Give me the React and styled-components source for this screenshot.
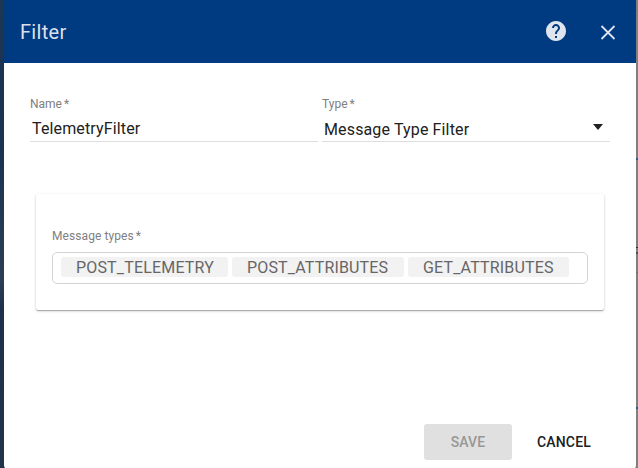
import React from "react";
import styled, { createGlobalStyle } from "styled-components";

const GlobalStyle = createGlobalStyle`
  * { box-sizing: border-box; }
  body { margin: 0; overflow: hidden; font-family: Roboto, "Liberation Sans", sans-serif; }
`;

const Backdrop = styled.div`
  display: grid;
  grid-template-columns: 4px 632px 2px;
  width: 638px;
  height: 468px;
  overflow: hidden;
`;

const NavEdge = styled.div`
  background: linear-gradient(#1d3653 0%, #1b3250 32%, #1e3551 38%, #2b3e56 60%, #1d304c 66%, #22344a 100%);
`;

const PageEdge = styled.div`
  display: flex;
  flex-direction: column;
  background: #7f7f7f;
`;

const EdgeMark = styled.div`
  flex: none;
  height: ${(p) => p.$h}px;
  margin-top: ${(p) => p.$gap}px;
  background: ${(p) => p.$color};
`;

const Dialog = styled.section`
  display: flex;
  flex-direction: column;
  height: 469px;
  background: #fff;
  border-radius: 0 0 4px 4px;
`;

const Under = styled.div`
  background: linear-gradient(90deg, #22344a 50%, #7f7f7f 50%);
`;

const Toolbar = styled.header`
  display: flex;
  align-items: center;
  flex: none;
  height: 63px;
  padding: 0 18px 0 16px;
  background: #003a80;
  color: rgba(255, 255, 255, 0.87);
`;

const Title = styled.h2`
  flex: 1;
  margin: 0;
  font-size: 20px;
  font-weight: 400;
  line-height: 24px;
  letter-spacing: 0.3px;
  padding-top: 1px;
`;

const IconButton = styled.button`
  display: flex;
  padding: 0 0 ${(p) => p.$lift || 0}px;
  margin-left: ${(p) => p.$gap || 0}px;
  border: 0;
  background: none;
  color: inherit;
`;

const Fields = styled.div`
  display: flex;
  gap: 4px;
  padding: 33px 26px 0;
`;

const Field = styled.div`
  width: 288px;
  height: 46px;
  border-bottom: 1px solid #dedede;
`;

const Label = styled.label`
  display: block;
  font-size: 12px;
  line-height: 16px;
  letter-spacing: ${(p) => p.$track || 0}px;
  color: #808080;
`;

const Star = styled.span`
  margin-left: 2px;
`;

const Value = styled.div`
  display: flex;
  justify-content: space-between;
  padding: ${(p) => p.$top}px 7px 0 2px;
  font-size: 16px;
  line-height: 20px;
  letter-spacing: 0.14px;
  color: #212121;
`;

const Caret = styled.span`
  width: 0;
  height: 0;
  margin-top: 4px;
  border: 5.5px solid transparent;
  border-top-width: 6px;
  border-top-color: #212121;
  border-bottom: 0;
`;

const Panel = styled.div`
  width: 568px;
  height: 116px;
  margin: 52px 32px 0;
  padding: 34px 16px 0;
  border-radius: 2px;
  box-shadow: 0 1px 3px rgba(0, 0, 0, 0.2), 0 1px 1px rgba(0, 0, 0, 0.14), 0 2px 1px -1px rgba(0, 0, 0, 0.12);
`;

const ChipList = styled.div`
  display: flex;
  gap: 4px;
  height: 32px;
  margin-top: 8px;
  padding: 4px 8px;
  border: 1px solid #d3d3d3;
  border-radius: 5px;
`;

const Chip = styled.span`
  width: ${(p) => p.$w}px;
  height: 20px;
  padding-left: 15px;
  border-radius: 3px;
  background: #f2f2f2;
  color: #666;
  font-size: 16px;
  line-height: 21px;
  letter-spacing: 0.17px;
  white-space: nowrap;
`;

const Actions = styled.footer`
  display: flex;
  justify-content: flex-end;
  gap: 8px;
  margin-top: auto;
  padding: 0 28px 9px 0;
`;

const Button = styled.button`
  width: ${(p) => p.$w}px;
  height: 36px;
  padding: 0;
  border: 0;
  border-radius: 3px;
  background: ${(p) => (p.disabled ? "#e0e0e0" : "transparent")};
  color: ${(p) => (p.disabled ? "#979797" : "#212121")};
  font-family: inherit;
  font-size: 14px;
  font-weight: 500;
  letter-spacing: 0.14px;
`;

const chips = [
  ["POST_TELEMETRY", 167],
  ["POST_ATTRIBUTES", 172],
  ["GET_ATTRIBUTES", 161],
];

const marks = [
  [10, 1, "#747474"],
  [147, 2, "#205f92"],
  [87, 1, "#303030"],
  [4, 2, "#505050"],
  [18, 1, "#707070"],
  [134, 2, "#205f92"],
];

export default function App() {
  return (
    <>
      <GlobalStyle />
      <Backdrop>
        <NavEdge />
        <Under>
          <Dialog>
            <Toolbar>
              <Title>Filter</Title>
              <IconButton aria-label="Help" $lift={1}>
                <svg width="24" height="24" viewBox="0 0 24 24" fill="currentColor">
                  <path d="M12 2C6.48 2 2 6.48 2 12s4.48 10 10 10 10-4.480 10-10S17.520 2 12 2zm1 17h-2v-2h2v2zm2.070-7.750l-.9.920C13.450 12.900 13 13.500 13 15h-2v-.5c0-1.100.45-2.100 1.170-2.830l1.240-1.260c.37-.36.59-.86.59-1.410 0-1.100-.9-2-2-2s-2 .9-2 2H8c0-2.210 1.790-4 4-4s4 1.790 4 4c0 .88-.36 1.680-.93 2.250z" />
                </svg>
              </IconButton>
              <IconButton aria-label="Close" $gap={30}>
                <svg width="20" height="20" viewBox="0 0 20 20" fill="none" stroke="currentColor" strokeWidth="1.8">
                  <path d="M3.500 4l13 13M16.500 4l-13 13" />
                </svg>
              </IconButton>
            </Toolbar>
            <Fields>
              <Field>
                <Label>Name<Star>*</Star></Label>
                <Value $top={7}>TelemetryFilter</Value>
              </Field>
              <Field>
                <Label>Type<Star>*</Star></Label>
                <Value $top={8}>Message Type Filter<Caret /></Value>
              </Field>
            </Fields>
            <Panel>
              <Label $track={0.08}>Message types<Star>*</Star></Label>
              <ChipList>
                {chips.map(([text, width]) => (
                  <Chip key={text} $w={width}>{text}</Chip>
                ))}
              </ChipList>
            </Panel>
            <Actions>
              <Button $w={88} disabled>SAVE</Button>
              <Button $w={88}>CANCEL</Button>
            </Actions>
          </Dialog>
        </Under>
        <PageEdge>
          {marks.map(([gap, height, color], i) => (
            <EdgeMark key={i} $gap={gap} $h={height} $color={color} />
          ))}
        </PageEdge>
      </Backdrop>
    </>
  );
}
